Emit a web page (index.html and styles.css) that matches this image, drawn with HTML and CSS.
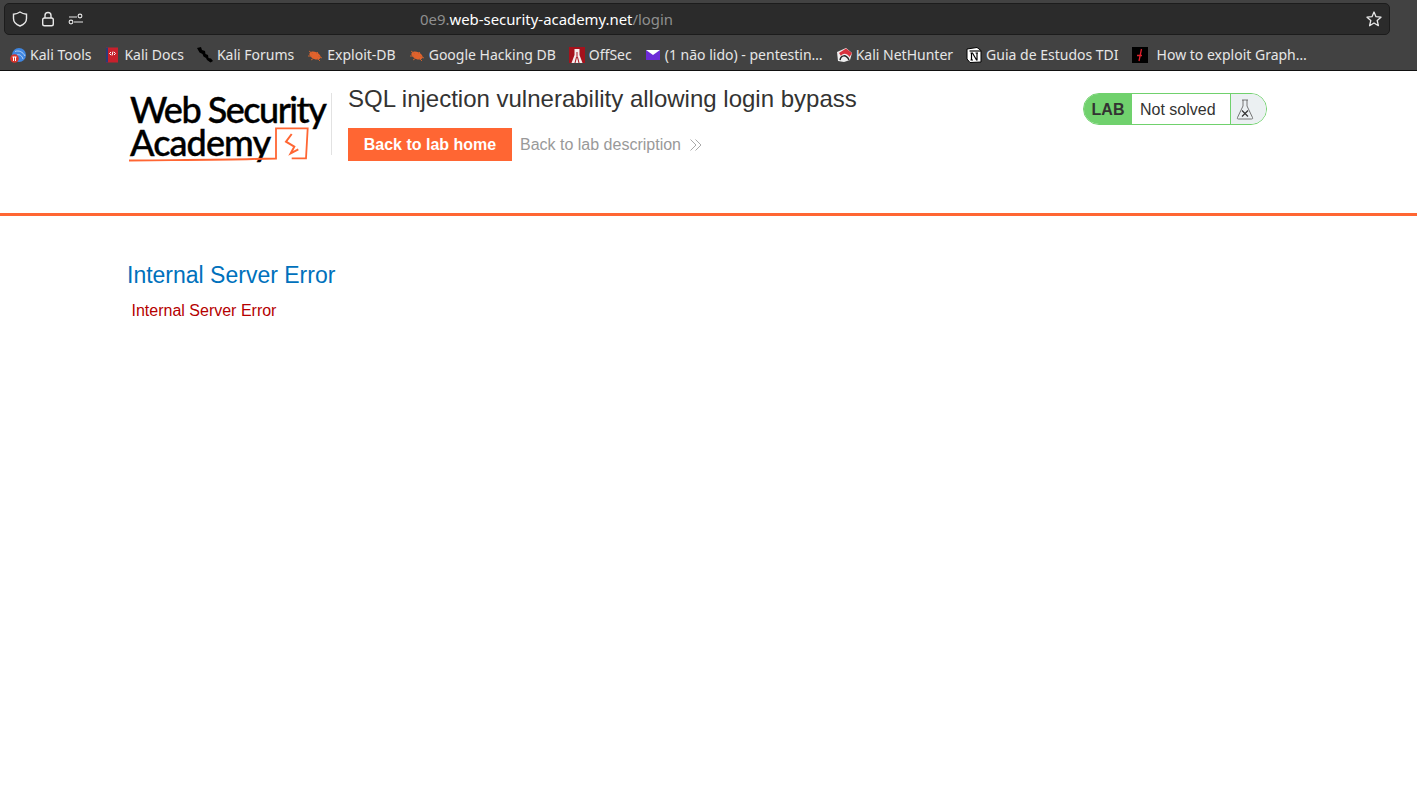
FILE: index.html
```html
<!DOCTYPE html>
<html lang="en">
<head>
<meta charset="utf-8">
<title>SQL injection vulnerability allowing login bypass</title>
<link rel="stylesheet" href="styles.css">
</head>
<body>
<div class="chrome">
  <div class="urlbar">
    <div class="url-icons">
      <svg class="ic" width="16" height="16" viewBox="0 0 16 16"><path d="M8 1 C10 2.400 12 3 14.500 3.200 V7.500 C14.500 11 12 13.600 8 15 C4 13.600 1.500 11 1.500 7.500 V3.200 C4 3 6 2.400 8 1 Z" fill="none" stroke="#e8e8e8" stroke-width="1.400"/></svg>
      <svg class="ic" width="16" height="16" viewBox="0 0 16 16"><path d="M5 7 V4.500 a3 3 0 0 1 6 0 V7" fill="none" stroke="#e8e8e8" stroke-width="1.400"/><rect x="2.700" y="7" width="10.600" height="7.800" rx="1.800" fill="none" stroke="#e8e8e8" stroke-width="1.400"/></svg>
      <svg class="ic" width="16" height="16" viewBox="0 0 16 16"><path d="M1 6 H9 M6 11 H15" stroke="#e8e8e8" stroke-width="1.200" fill="none"/><circle cx="12" cy="5" r="1.900" fill="none" stroke="#e8e8e8" stroke-width="1.100"/><circle cx="3" cy="11" r="1.900" fill="none" stroke="#e8e8e8" stroke-width="1.100"/></svg>
    </div>
    <div class="url"><span class="dim">0e9.</span>web-security-academy.net<span class="dim">/login</span></div>
    <svg class="star" width="16" height="16" viewBox="0 0 16 16"><path d="M8 1 L10 5.700 L15 6.200 L11.200 9.500 L12.400 14.700 L8 12 L3.600 14.700 L4.800 9.500 L1 6.200 L6 5.700 Z" fill="none" stroke="#e8e8e8" stroke-width="1.300" stroke-linejoin="round"/></svg>
  </div>
  <div class="bookmarks">
    <div class="bm"><svg width="16" height="16" viewBox="0 0 16 16"><circle cx="9" cy="8" r="7" fill="#3f86e0"/><path d="M5 4.500 C9 3 13 5 15 9 M7 8 C10 7 12 9 13 12" stroke="#cfe3fa" stroke-width="0.800" fill="none"/><circle cx="4.500" cy="11.500" r="4.300" fill="#d6342c"/><path d="M2.500 10 H6.500 M3.500 10 V14 M5.500 10 V14" stroke="#fff"/></svg><span>Kali Tools</span></div>
    <div class="bm"><svg width="16" height="16" viewBox="0 0 16 16"><rect x="2" y="0.500" width="12" height="15" fill="#c8202c"/><rect x="2" y="0.500" width="2" height="15" fill="#2a3a78"/><path d="M7 5 L5.500 6.500 L7 8 M10 5 L11.500 6.500 L10 8 M9 4.500 L8 8.500" stroke="#fff" fill="none"/></svg><span>Kali Docs</span></div>
    <div class="bm"><svg width="16" height="16" viewBox="0 0 16 16"><path d="M0 1 L4 0 L5 3 L8 4 L8.500 7 L11 8 L11.500 11 L14 11.500 L16 14 L13.500 15.500 L10 13 L9 11 L6.500 9.500 L5.500 7 L2.500 5.500 Z" fill="#000"/></svg><span>Kali Forums</span></div>
    <div class="bm"><svg width="16" height="16" viewBox="0 0 16 16"><ellipse cx="8" cy="8.500" rx="6" ry="3.500" transform="rotate(25 8 8.500)" fill="#e2622c"/><path d="M2 4 L6 7 M1 9 L5 9 M4 13 L7 11 M11 5 L9 7 M15 11 L11 9 M13 14 L10 11" stroke="#c9622f"/></svg><span>Exploit-DB</span></div>
    <div class="bm"><svg width="16" height="16" viewBox="0 0 16 16"><ellipse cx="8" cy="8.500" rx="6" ry="3.500" transform="rotate(25 8 8.500)" fill="#e2622c"/><path d="M2 4 L6 7 M1 9 L5 9 M4 13 L7 11 M11 5 L9 7 M15 11 L11 9 M13 14 L10 11" stroke="#c9622f"/></svg><span>Google Hacking DB</span></div>
    <div class="bm"><svg width="16" height="16" viewBox="0 0 16 16"><rect width="16" height="16" fill="#a5121c"/><path d="M5.500 2 H10.500 V8 L13.500 16 H2.500 L5.500 8 Z" fill="#f4eeee"/><path d="M8 5 V10 M6 16 L7.500 10 M10 16 L8.500 10" stroke="#a5121c"/></svg><span>OffSec</span></div>
    <div class="bm"><svg width="16" height="16" viewBox="0 0 16 16"><rect x="1" y="3" width="14" height="10" fill="#6d2ad8"/><path d="M1 3 H15 L8 8 Z" fill="#fff"/></svg><span>(1 não lido) - pentestin…</span></div>
    <div class="bm"><svg width="16" height="16" viewBox="0 0 16 16"><path d="M1 5 L10 1 L16 6 L14 13 L8 15 L2 14 Z" fill="#efefef"/><path d="M3 6 L10 1.500 L16 6 L13.500 10 C11 6 7 6 5 9 Z" fill="#d8323c"/><path d="M4 13 C5 8 10 7 13 13" stroke="#222" stroke-width="1.500" fill="none"/></svg><span>Kali NetHunter</span></div>
    <div class="bm"><svg width="16" height="16" viewBox="0 0 16 16"><path d="M1 2 L11 0.500 L15 3.500 V15 L4 15.500 L1 12 Z" fill="#fff" stroke="#000"/><path d="M3.500 4 H15" stroke="#000" stroke-width="1.200"/><path d="M5.500 13 V6 H6.500 L10.500 13 H11 V6 M4.500 6 H7 M9.500 6 H12 M4.500 13 H7" stroke="#000" fill="none" stroke-width="1.200"/></svg><span>Guia de Estudos TDI</span></div>
    <div class="bm wide"><svg width="16" height="16" viewBox="0 0 16 16"><rect width="16" height="16" fill="#000"/><path d="M9.500 2 L7 14 M5 8.500 H10" stroke="#e0202c" stroke-width="1.300"/></svg><span>How to exploit Graph…</span></div>
  </div>
</div>
<header class="lab-header">
  <div class="lab-inner">
    <div class="logo">
      <div class="logo-line">Web Security</div>
      <div class="logo-line logo-line-second">Academy</div>
      <svg class="logo-mark" width="200" height="38" viewBox="0 0 200 38"><path d="M1 34.500 C40 34 90 34 125 33 L148 32.500 V2.300 H179.700 L178 32.300 H163.700" fill="none" stroke="#ff6633" stroke-width="1.800"/><path d="M163.700 8 L158 15.700 L166.300 20.700 L162.700 27.300 L170.300 23.300" fill="none" stroke="#ff6633" stroke-width="2"/></svg>
    </div>
    <div class="title-block">
      <h1 class="lab-title">SQL injection vulnerability allowing login bypass</h1>
      <div class="lab-links">
        <a class="btn">Back to lab home</a>
        <a class="desc">Back to lab description</a>
        <svg class="chev" width="14" height="14" viewBox="0 0 14 14"><path d="M1.500 1.500 L7 7 L1.500 12.500 M6.500 1.500 L12 7 L6.500 12.500" fill="none" stroke="#a9a9a9"/></svg>
      </div>
    </div>
    <div class="status">
      <span class="status-lab">LAB</span>
      <span class="status-text">Not solved</span>
      <span class="status-icon"><svg width="20" height="24" viewBox="0 0 20 24"><path d="M7 3 H13 M8 3 V9 L2.500 20.500 C2 21.500 2.500 22 3.500 22 H16.500 C17.500 22 18 21.500 17.500 20.500 L12 9 V3" fill="none" stroke="#555" stroke-width="0.800"/><path d="M7 13.500 L13 19.500 M13 13.500 L7 19.500" stroke="#333" stroke-width="1.200"/></svg></span>
    </div>
  </div>
</header>
<main class="content">
  <h4 class="err-title">Internal Server Error</h4>
  <p class="err-text">Internal Server Error</p>
</main>
</body>
</html>
```
FILE: styles.css
```css
* { box-sizing: border-box; }
html, body { margin: 0; padding: 0; background: #fff; }
body { font-family: "Liberation Sans", Arial, sans-serif; height: 798px; overflow: hidden; }

.chrome { height: 71px; background: #424242; border-bottom: 1px solid #111; padding: 3px 27px 0 4px; font-family: "Noto Sans", sans-serif; }
.urlbar { height: 32px; background: #2b2b2b; border: 1px solid #1c1c1c; border-radius: 5px; display: flex; align-items: center; padding: 0 7px; }
.url-icons { display: flex; gap: 12px; width: 408px; }
.ic { display: block; }
.url { flex: 1; color: #fff; font-size: 14.900px; }
.dim { color: #8f8f8f; }
.bookmarks { height: 35px; display: flex; align-items: center; padding: 4px 0 0 6px; margin-right: -27px; color: #e6e6e6; font-size: 14px; }
.bm { display: flex; align-items: center; gap: 4px; margin-right: 13px; white-space: nowrap; }
.bm.wide { gap: 9px; }
.bm svg { display: block; flex: none; }

.lab-header { height: 145px; border-bottom: 3px solid #ff6633; }
.lab-inner { width: 1140px; margin-left: 128px; display: flex; padding-top: 14px; }
.logo { width: 204px; height: 62px; padding: 6px 0 0 2px; position: relative; border-right: 1px solid #e2e2e2; margin-top: 8px; font-family: Lato, sans-serif; color: #000; }
.logo-line { font-size: 36px; line-height: 34px; letter-spacing: -1.500px; font-weight: 500; -webkit-text-stroke: 0.400px #000; white-space: nowrap; margin-top: -7px; }
.logo-line-second { margin-top: -1px; letter-spacing: -0.900px; }
.logo-mark { position: absolute; left: 0; top: 33px; }
.title-block { margin-left: 16px; width: 735px; }
.lab-title { margin: 0; font-size: 24px; font-weight: 400; line-height: 28px; color: #333332; }
.lab-links { display: flex; align-items: center; margin-top: 15px; }
.btn { height: 33px; width: 164px; background: #ff6633; color: #fff; font-weight: 700; font-size: 16px; display: flex; align-items: center; justify-content: center; }
.desc { color: #999; font-size: 16px; margin-left: 8px; }
.chev { margin-left: 8px; }
.status { display: flex; height: 32px; width: 184px; margin-top: 8px; border: 1px solid #70d16d; border-radius: 16px; overflow: hidden; font-size: 16px; line-height: 20px; color: #333332; }
.status-lab { width: 48px; background: #70d16d; font-weight: 700; display: flex; align-items: center; justify-content: center; padding-top: 2px; }
.status-text { width: 99px; display: flex; align-items: center; padding: 2px 0 0 8px; border-right: 1px solid #70d16d; }
.status-icon { flex: 1; background: #ebf0f2; display: flex; align-items: center; padding-left: 4px; }

.content { width: 1140px; margin-left: 127px; padding-top: 45px; }
.err-title { margin: 0; font-size: 23px; font-weight: 400; line-height: 28px; color: #0071bc; }
.err-text { margin: 12px 0 0 4.500px; font-size: 16px; line-height: 20px; color: #b50000; }
```
